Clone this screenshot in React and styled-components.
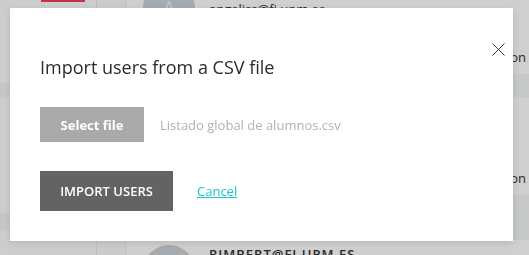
import React from "react";
import styled, { createGlobalStyle } from "styled-components";

const GlobalStyle = createGlobalStyle`
  html, body {
    margin: 0;
    padding: 0;
    height: 100%;
    overflow: hidden;
  }
  body {
    font-family: "Open Sans", "Liberation Sans", sans-serif;
    background: #ffffff;
  }
`;

const Page = styled.div`
  display: flex;
  height: 100vh;
  width: 100%;
  background: #ffffff;
  overflow: hidden;
`;

const Sidebar = styled.aside`
  width: 96px;
  flex: none;
  display: flex;
  flex-direction: column;
  background: #fdfdfd;
`;

const RedMark = styled.div`
  margin-left: 41px;
  width: 44px;
  height: 2px;
  background: #ee4652;
`;

const SideBand = styled.div`
  margin-top: ${(p) => p.$top}px;
  height: ${(p) => p.$h}px;
  background: #f2f6f5;
`;

const Divider = styled.div`
  width: 28px;
  flex: none;
  border-left: 1px solid #ececec;
  border-right: 1px solid #ececec;
  background: #fbfbfb;
`;

const List = styled.main`
  flex: 1;
  display: flex;
  flex-direction: column;
  margin-top: -26px;
`;

const Row = styled.div`
  height: ${(p) => p.$h}px;
  flex: none;
  display: flex;
  align-items: flex-start;
  justify-content: space-between;
  padding: ${(p) => p.$pt}px 3px 0 17px;
  box-sizing: border-box;
`;

const Band = styled.div`
  height: ${(p) => p.$h}px;
  flex: none;
  background: #f3f7f6;
`;

const User = styled.div`
  display: flex;
  gap: 14px;
`;

const Avatar = styled.div`
  width: 52px;
  height: 52px;
  border-radius: 50%;
  background: #cdd3d9;
  color: #eef1f4;
  font-size: 22px;
  display: flex;
  align-items: center;
  justify-content: center;
`;

const Lines = styled.div`
  display: flex;
  flex-direction: column;
  font-size: 13px;
  line-height: 18px;
  color: #333;
  padding-top: ${(p) => p.$pt || 0}px;
`;

const Upper = styled.span`
  text-transform: uppercase;
  font-weight: 600;
  letter-spacing: 1px;
`;

const Side = styled.span`
  margin-left: auto;
  align-self: flex-end;
  margin-bottom: 8px;
  font-size: 13px;
  color: #333;
`;

const Backdrop = styled.div`
  position: fixed;
  inset: 0;
  background: rgba(0, 0, 0, 0.19);
`;

const Modal = styled.section`
  position: fixed;
  left: 10px;
  top: 8px;
  width: 503px;
  box-sizing: border-box;
  padding: 47px 30px 30px;
  background: #ffffff;
  box-shadow: 0 2px 8px rgba(0, 0, 0, 0.12);
  display: flex;
  flex-direction: column;
`;

const Close = styled.button`
  position: absolute;
  top: 35px;
  right: 8px;
  width: 13px;
  height: 13px;
  padding: 0;
  border: none;
  background: none;
  cursor: pointer;
  display: block;
`;

const Title = styled.h2`
  margin: 0;
  font-size: 18px;
  line-height: 24px;
  font-weight: 400;
  color: #2b2b2b;
`;

const FileRow = styled.div`
  margin-top: 28px;
  display: flex;
  align-items: center;
  gap: 16px;
`;

const Button = styled.button`
  width: ${(p) => p.$w}px;
  height: ${(p) => p.$h}px;
  border: none;
  padding: 0;
  background: ${(p) => p.$bg};
  color: #ffffff;
  font-family: "Open Sans", "Liberation Sans", sans-serif;
  font-size: 13px;
  font-weight: ${(p) => p.$weight};
  text-transform: ${(p) => (p.$upper ? "uppercase" : "none")};
  cursor: pointer;
`;

const FileName = styled.span`
  font-size: 13px;
  color: #aeb3b9;
`;

const Actions = styled.div`
  margin-top: 29px;
  display: flex;
  align-items: center;
  gap: 24px;
`;

const CancelLink = styled.a`
  font-size: 13px;
  color: #1ec4cf;
  text-decoration: underline;
  cursor: pointer;
`;

export default function App() {
  return (
    <>
      <GlobalStyle />
      <Page>
        <Sidebar>
          <RedMark />
          <SideBand $top={81} $h={15} />
          <SideBand $top={115} $h={17} />
        </Sidebar>
        <Divider />
        <List>
          <Row $h={100} $pt={8}>
            <User>
              <Avatar>A</Avatar>
              <Lines>
                <span>Ángel Lis</span>
                <span>angeliss@fi.upm.es</span>
              </Lines>
            </User>
            <Side>Administration</Side>
          </Row>
          <Band $h={24} />
          <Row $h={97} $pt={10}>
            <Side>Administration</Side>
          </Row>
          <Band $h={45} />
          <Row $h={60} $pt={5}>
            <User>
              <Avatar>R</Avatar>
              <Lines>
                <Upper>rimbert@fi.upm.es</Upper>
              </Lines>
            </User>
          </Row>
        </List>
      </Page>
      <Backdrop />
      <Modal>
        <Close aria-label="Close">
          <svg width="13" height="13" viewBox="0 0 13 13">
            <path d="M0.5 0.5 L12.5 12.5 M12.5 0.5 L0.5 12.5" stroke="#333" strokeWidth="1" fill="none" />
          </svg>
        </Close>
        <Title>Import users from a CSV file</Title>
        <FileRow>
          <Button $w={104} $h={35} $bg="#a9a9a9" $weight={700}>
            Select file
          </Button>
          <FileName>Listado global de alumnos.csv</FileName>
        </FileRow>
        <Actions>
          <Button $w={133} $h={40} $bg="#636363" $weight={600} $upper>
            Import users
          </Button>
          <CancelLink>Cancel</CancelLink>
        </Actions>
      </Modal>
    </>
  );
}
